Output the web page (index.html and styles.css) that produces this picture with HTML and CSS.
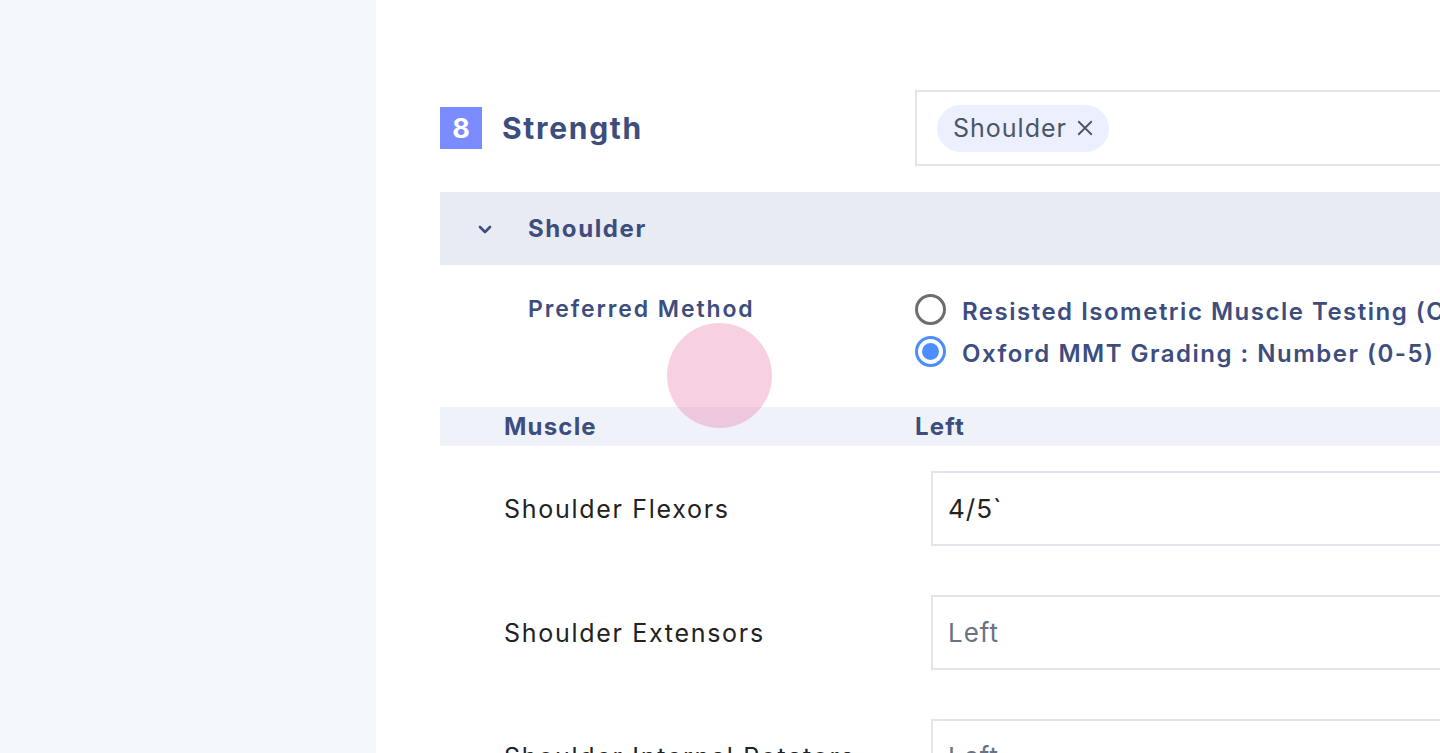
FILE: index.html
```html
<!DOCTYPE html>
<html>
<head>
<meta charset="utf-8">
<link rel="stylesheet" href="styles.css">
</head>
<body>
<div class="app">
  <aside class="sidebar"></aside>
  <main class="main">
    <div class="section-head">
      <div class="title-wrap">
        <span class="badge">8</span>
        <h2 class="title">Strength</h2>
      </div>
      <div class="select-box">
        <span class="chip">Shoulder
          <svg class="chip-x" viewBox="0 0 16 16" width="18" height="18"><path d="M2 2 L14 14 M14 2 L2 14" stroke="#4a5568" stroke-width="1.6" fill="none"/></svg>
        </span>
      </div>
    </div>

    <div class="collapse-head">
      <svg class="chev" viewBox="0 0 14 10" width="14" height="10"><path d="M2 2 L7 7 L12 2" stroke="#3d4e7e" stroke-width="2.6" fill="none" stroke-linecap="round" stroke-linejoin="round"/></svg>
      <span class="collapse-title">Shoulder</span>
    </div>

    <div class="method-row">
      <div class="method-label">Preferred Method</div>
      <div class="radios">
        <label class="radio"><span class="dot"></span><span class="radio-text">Resisted Isometric Muscle Testing (Concentric)</span></label>
        <label class="radio checked"><span class="dot"></span><span class="radio-text">Oxford MMT Grading : Number (0-5)</span></label>
      </div>
    </div>

    <div class="table-head">
      <div class="th th-muscle">Muscle</div>
      <div class="th th-left">Left</div>
    </div>

    <div class="rows">
      <div class="row">
        <div class="muscle">Shoulder Flexors</div>
        <div class="input"><span class="value">4/5`</span></div>
      </div>
      <div class="row">
        <div class="muscle">Shoulder Extensors</div>
        <div class="input"><span class="placeholder">Left</span></div>
      </div>
      <div class="row">
        <div class="muscle">Shoulder Internal Rotators</div>
        <div class="input"><span class="placeholder">Left</span></div>
      </div>
    </div>

    <div class="touch"></div>
  </main>
</div>
</body>
</html>
```

FILE: styles.css
```css
* { box-sizing: border-box; }
html, body { margin: 0; padding: 0; height: 100%; overflow: hidden; }
body {
  font-family: "Inter", "Open Sans", sans-serif;
  color: #222;
  background: #fff;
}
.app { display: flex; height: 753px; }
.sidebar { width: 376px; flex: none; background: #f4f7fc; }
.main {
  flex: 1;
  position: relative;
  overflow: hidden;
  padding: 90px 0 0 64px;
  min-width: 0;
}
.section-head { display: flex; align-items: center; height: 76px; }
.title-wrap { width: 475px; flex: none; display: flex; align-items: center; }
.badge {
  width: 42px; height: 42px;
  background: #7a8cff;
  color: #fff;
  font-weight: 700;
  font-size: 27px;
  display: flex; align-items: center; justify-content: center;
  margin-right: 20px;
}
.title {
  margin: 0;
  font-size: 30px;
  font-weight: 700;
  letter-spacing: 1.7px;
  color: #3d4e7e;
}
.select-box {
  flex: none;
  width: 800px;
  height: 76px;
  border: 2px solid #e2e5ed;
  border-right: none;
  display: flex; align-items: center;
  padding-left: 20px;
}
.chip {
  display: inline-flex; align-items: center;
  height: 47px;
  padding: 0 15px 0 16px;
  border-radius: 24px;
  background: #eceffd;
  color: #4a5568;
  font-size: 25px;
  letter-spacing: 1px;
}
.chip-x { margin-left: 9px; }
.collapse-head {
  margin-top: 26px;
  height: 73px;
  background: #e8ebf3;
  display: flex; align-items: center;
  padding-left: 38px;
}
.chev { margin-right: 36px; margin-top: 2px; }
.collapse-title { font-size: 24px; font-weight: 700; color: #3d4e7e; letter-spacing: 1.6px; }
.method-row {
  display: flex;
  height: 142px;
  padding-top: 26px;
}
.method-label {
  width: 475px; flex: none;
  padding-left: 88px;
  font-size: 23px; font-weight: 600; color: #3d4e7e;
  letter-spacing: 1.9px;
  line-height: 36px;
}
.radios { display: flex; flex-direction: column; gap: 6px; }
.radio { display: flex; align-items: center; height: 36px; white-space: nowrap; }
.dot {
  width: 31px; height: 31px; border-radius: 50%;
  border: 3px solid #6d6d6d;
  margin-right: 16px;
  flex: none;
  position: relative;
  background: #fff;
}
.radio.checked .dot { border-color: #4c8dff; }
.radio.checked .dot::after {
  content: ""; position: absolute; left: 4px; top: 4px; width: 17px; height: 17px;
  border-radius: 50%; background: #4c8dff;
}
.radio-text { font-size: 24px; font-weight: 600; color: #3d4e7e; margin-top: 4px; letter-spacing: 1.5px; }
.table-head {
  height: 39px;
  background: #eff2f8;
  display: flex; align-items: center;
}
.th { font-size: 24px; font-weight: 700; color: #3d4e7e; letter-spacing: 1.2px; }
.th-muscle { width: 475px; flex: none; padding-left: 64px; }
.rows { padding-top: 25px; display: flex; flex-direction: column; gap: 49px; }
.row { display: flex; align-items: center; height: 75px; }
.muscle { width: 491px; flex: none; padding-left: 64px; font-size: 25px; color: #222; letter-spacing: 1.7px; white-space: nowrap; }
.input {
  flex: none; width: 700px; height: 75px;
  border: 2px solid #e2e5ed; border-right: none;
  display: flex; align-items: center;
  padding-left: 15px;
  font-size: 26px;
  letter-spacing: 1px;
}
.value { color: #222; }
.placeholder { color: #6b7280; }
.touch {
  position: absolute;
  left: 291px; top: 323px;
  width: 105px; height: 105px; border-radius: 50%;
  background: rgba(230, 100, 160, 0.3);
}
```
